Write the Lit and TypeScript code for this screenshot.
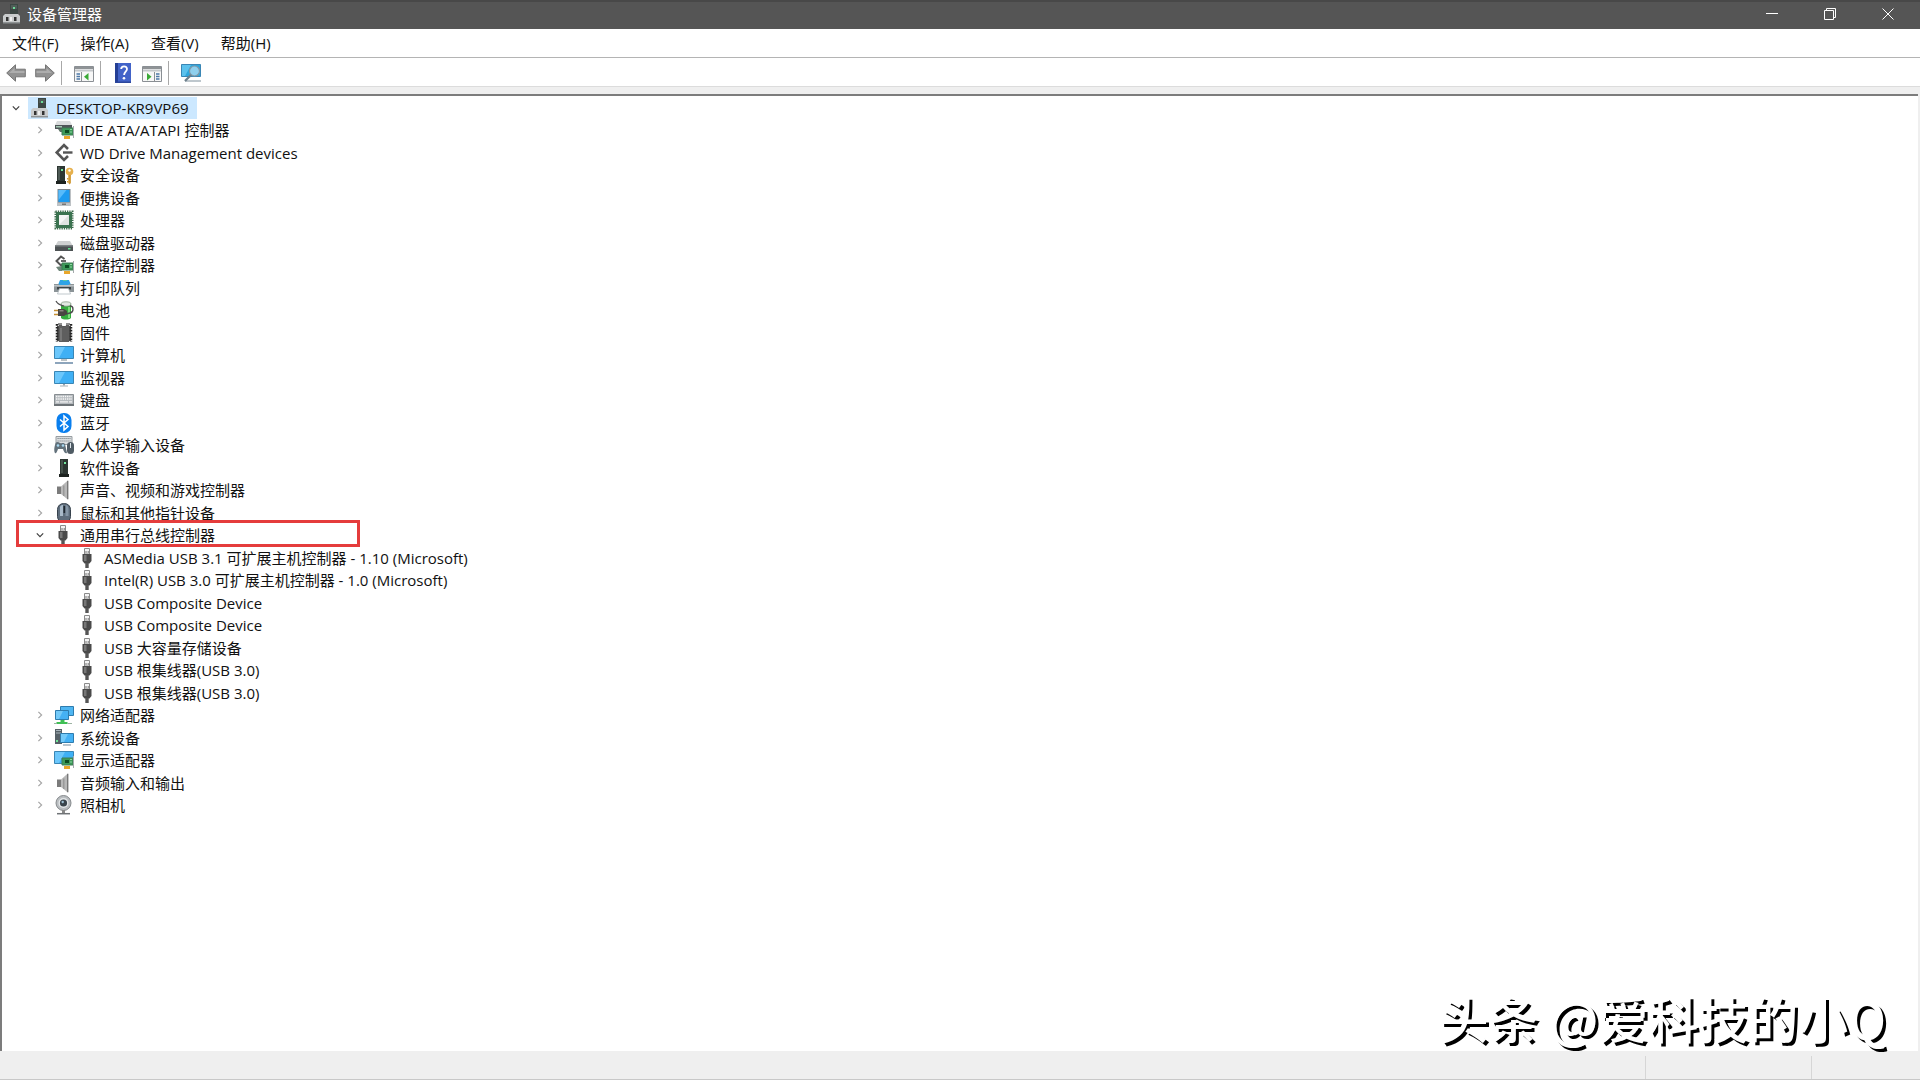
import { LitElement, html, svg, css, nothing } from "lit";
import { customElement, property, state } from "lit/decorators.js";

const board = svg`
  <path d="M8 8h11v7H8z" fill="#3c9a58"/>
  <path d="M8 8h11v7H8z" fill="none" stroke="#3f7d54"/>
  <path d="M11 10h4v3h-4z" fill="#0d4d22"/>
  <path d="M10 16h6v3h-6z" fill="#e8a72c"/>
  <path d="M16 9.500h2M16 12h2" stroke="#8fd6a2"/>
  <path d="M19.500 6v12" stroke="#a4aaad"/>`;

const usb = svg`
  <g transform="translate(-1 0)">
    <path d="M7.500 .5h5v5.500h-5z" fill="#f4f4f4" stroke="#8b8b8b"/>
    <path d="M8.500 3h1v2h-1zM10.700 3h1v2h-1z" fill="#777"/>
    <path d="M5.500 6h9v7l-2 2.500h-5l-2-2.500z" fill="#4a4a4a"/>
    <path d="M7 7h2.500v6H7z" fill="#777"/>
    <path d="M8.300 15h3.400v5H8.300z" fill="#555"/>
  </g>`;

const speaker = svg`
  <path d="M3 6.500h4v7.500H3z" fill="#7b7b7b"/>
  <path d="M7 6.500L13.500 .8v18.400L7 14z" fill="#b8b8b8"/>
  <path d="M9 5.500h1.500v10.500H9z" fill="#999"/>
  <path d="M13.700 .8v18.400" stroke="#777" stroke-width="1.400"/>`;

const pc = svg`
  <path d="M8 0h8v11H8z" fill="#3d4744"/>
  <path d="M9 1h6v4H9z" fill="#505d58"/>
  <path d="M11 3h2v2h-2z" fill="#6ddb99"/>
  <path d="M3 10h13l2 2v7H1v-7z" fill="#c9cbcc"/>
  <path d="M1 18h17v1.500H1z" fill="#8f9394"/>
  <path d="M4 13h2.500v4H4zM12 13h2.500v4H12z" fill="#333"/>
  <path d="M8 13h2v4H8z" fill="#eee"/>`;

const diamond = svg`
  <path d="M14 6L10 2 2.700 9.500 10 17l4-4" fill="none" stroke="#555" stroke-width="2.600"/>
  <path d="M9 9.500h9.500" stroke="#555" stroke-width="2.400"/>`;

const snapIn = svg`
  <path d="M.5 3.500h19v15H.5z" fill="#f7f7f7" stroke="#8a8f94"/>
  <path d="M1 4h18v2H1z" fill="#8f9396"/>
  <path d="M1 6.500h18v2H1z" fill="#c3c7ca"/>`;

const icons: Record<string, unknown> = {
  pc,
  usb,
  speaker,
  wd: diamond,
  ide: svg`
    <path d="M3 1h13l2 4H1z" fill="#d9dbdc"/><path d="M1 5h17v4H1z" fill="#4e5557"/>
    <path d="M4 9h5v3H6z" fill="#5f7468"/><path d="M2 6h6v1.500H2z" fill="#a3c7b2"/>${board}`,
  security: svg`
    <path d="M3 1h8v15H3z" fill="#2d3632"/><path d="M4 2h2v13H4z" fill="#4e5a55"/>
    <path d="M7 4h2v2H7z" fill="#74e79e"/><path d="M2 16h10v3H2z" fill="#1d2320"/>
    <circle cx="15.500" cy="6.500" r="3.800" fill="#e6b04d"/><circle cx="15.500" cy="5.500" r="1.200" fill="#fff"/>
    <path d="M14.300 10h2.600v8l-1.300 1.500-1.300-1.500z" fill="#d29a35"/>
    <path d="M13 13h1.500v1.500H13zM13 16h1.500v1.500H13z" fill="#d29a35"/>`,
  portable: svg`
    <path d="M3.500 1h13v17h-13z" fill="#7b8288"/><path d="M4.500 2h11v12h-11z" fill="#1e9bf0"/>
    <path d="M4.500 2h8l-8 10z" fill="#58bbfa"/><path d="M3.500 14.500h13V18h-13z" fill="#bcc2c6"/>
    <path d="M8 15.500h4v1.500H8z" fill="#777"/>`,
  cpu: svg`
    <rect x="1.500" y="1.500" width="17" height="17" fill="none" stroke="#3c6b4c" stroke-width="2" stroke-dasharray="1.300 1"/>
    <path d="M2 2h16v16H2z" fill="#3b7350"/><path d="M5 5h10v10H5z" fill="#dfe3e1"/>
    <path d="M5 5h10L5 15z" fill="#f5f6f6"/>`,
  disk: svg`
    <path d="M4 8h12l3 5H1z" fill="#cfd1d2"/><path d="M1 12h18v6H1z" fill="#4d5254"/>
    <path d="M1 12h18v1.500H1z" fill="#7c8284"/><path d="M14 15h2.500v1.500H14z" fill="#62df8e"/>`,
  storage: svg`
    <path d="M10.500 4L7 1.500 2.500 6 7 10.500l2-1.500" fill="none" stroke="#555" stroke-width="2"/>
    <path d="M7 6h5" stroke="#555" stroke-width="1.800"/>
    <path d="M2 12l6-1v5H5z" fill="#6e8578"/>${board}`,
  printer: svg`
    <path d="M6 2h9l2 5H4z" fill="#2ea3e6"/><path d="M9 2h4v4H9z" fill="#55c8a8"/>
    <path d="M0 6h20v8H0z" fill="#8c9498"/><path d="M6 3h8l1 4H5z" fill="#2ea3e6"/>
    <path d="M0 7h20v1.500H0z" fill="#bcc3c6"/><path d="M3 9h14v2.500H3z" fill="#3d4447"/>
    <path d="M5.500 10.500h9l2 5.500h-13z" fill="#fff" stroke="#a8b1b7" stroke-width=".7"/>`,
  battery: svg`
    <path d="M7 4h10v14c-2 2-8 2-10 0z" fill="#36ad3f"/>
    <ellipse cx="12" cy="4" rx="5" ry="2.200" fill="#e2e8e2" stroke="#789079" stroke-width=".7"/>
    <path d="M14 7h2v11h-2z" fill="#7bdc78"/>
    <path d="M2 1c2 4 5 4 8 5M16 6c4 0 4 6 0 7l-4 1" fill="none" stroke="#4d4d4d" stroke-width="1.300"/>
    <path d="M4 9h6l3 2v3l-3 2H4z" fill="#4a4642"/><path d="M5.500 10h4v1.500h-4z" fill="#8a8580"/>
    <path d="M0 10.500h4M0 14.500h4" stroke="#c59034" stroke-width="1.700"/>`,
  firmware: svg`
    <path d="M3 3h14v15H3z" fill="#4c4c4c"/>
    <path d="M3 1v18M17 1v18" stroke="#252525" stroke-width="2.500" stroke-dasharray="1.700 1.200"/>
    <path d="M5 2h3c0 2 4 2 4 0h3v17H5z" fill="#5e5e5e"/><path d="M6 5h2v13H6z" fill="#777"/>
    <path d="M4 1h4M12 1h4" stroke="#252525"/>`,
  computer: svg`
    <path d="M.5 1.500h19v12H.5z" fill="#3fb0f5" stroke="#3a86b5"/>
    <path d="M1 2h10L5 13H1z" fill="#6cc7fb"/><path d="M7 15h6" stroke="#8e9aa1" stroke-width="1.200"/>
    <path d="M1 18h18" stroke="#809bb5" stroke-width="1.800"/>`,
  monitor: svg`
    <path d="M.5 3.500h19v12H.5z" fill="#3fb0f5" stroke="#3a86b5"/>
    <path d="M1 4h10L5 15H1z" fill="#6cc7fb"/><path d="M9 16h2v1.500H9z" fill="#9aa4ab"/>
    <path d="M6 18h8" stroke="#a6afb5"/>`,
  keyboard: svg`
    <path d="M.5 4.500h19v11H.5z" fill="#b6bbbf" stroke="#888e92"/>
    <path d="M2 6.500h16M2 9h16" stroke="#f7f7f7" stroke-width="1.300" stroke-dasharray="1.400 .8"/>
    <path d="M2 11.800h3M6 11.800h8M15 11.800h3" stroke="#f2f2f2" stroke-width="1.300"/>
    <path d="M0 15h20" stroke="#6d7377" stroke-width="2"/>`,
  bluetooth: svg`
    <rect x="2.500" y="0" width="15" height="20" rx="7" fill="#0a7fee"/>
    <path d="M6 6.500l8 7-4 3.500V3l4 3.500-8 7" fill="none" stroke="#fff" stroke-width="1.500"/>`,
  hid: svg`
    <path d="M2 1.500h16v8H2z" fill="#dadddf" stroke="#979da1"/>
    <path d="M3.500 3.500h13M3.500 6h13" stroke="#7d8589" stroke-dasharray="1.200 .8"/>
    <path d="M1 10c1-4 3-3 5-2s3-1 5 1l2 9c-2 1-3-1-4-4H4c-1 3-2 5-3 4s-1-5 0-8z" fill="#62717b"/>
    <circle cx="4" cy="10.500" r="1.300" fill="#a8d7f0"/><circle cx="9" cy="10.500" r="1.300" fill="#a8d7f0"/>
    <rect x="13" y="7" width="7" height="12" rx="3.500" fill="#4f5b64"/><path d="M16.500 8v5" stroke="#dde6ec"/>`,
  software: svg`
    <path d="M6 1h8v15H6z" fill="#2d3632"/><path d="M7 2h2v13H7z" fill="#46524c"/>
    <path d="M10 4h2v2h-2z" fill="#74e79e"/><path d="M5 16h10v3H5z" fill="#1d2320"/>`,
  mouse: svg`
    <rect x="3.500" y=".5" width="13" height="19" rx="6" fill="#5e6d7c" stroke="#37424d"/>
    <path d="M6 3.500C7 2 8 2 9 2v11H6z" fill="#a9bac9"/><path d="M11.500 2c2 0 3 2 3 4v7h-3z" fill="#8495a5"/>
    <path d="M10.300 3v7" stroke="#1f2830" stroke-width="1.700"/>`,
  network: svg`
    <path d="M6.500 1.500h13v9h-13z" fill="#4fb6f2" stroke="#2e7cae"/>
    <path d="M1.500 5.500h13v9h-13z" fill="#45b1f4" stroke="#2e7cae"/><path d="M2 6h7l-4 8H2z" fill="#74caf9"/>
    <path d="M6.500 15h4v2h3v2h-11v-2h4z" fill="#3fbf55"/><path d="M0 18.500h3M13.500 18.500H18" stroke="#9db3a3"/>`,
  system: svg`
    <path d="M1 1h7v15H1z" fill="#566067"/><path d="M2 2.500h5M2 5h5" stroke="#a8b4bb"/><path d="M2 12h2v2H2z" fill="#6fe596"/>
    <path d="M6.500 5.500h13v9h-13z" fill="#45b1f4" stroke="#2e7cae"/><path d="M7 6h7l-4 8H7z" fill="#74caf9"/>
    <path d="M9 17h8" stroke="#93a6b3" stroke-width="1.300"/>`,
  display: svg`
    <path d="M.5 1.500h19v12H.5z" fill="#3fb0f5" stroke="#3a86b5"/><path d="M1 2h10L5 13H1z" fill="#6cc7fb"/>
    ${board}`,
  camera: svg`
    <circle cx="9.500" cy="8" r="7.500" fill="#b9bdc0" stroke="#85898c"/><circle cx="9.500" cy="8" r="5" fill="#e4e7e9"/>
    <circle cx="9.500" cy="8" r="3.600" fill="#39444c"/><circle cx="8.700" cy="7" r="1.200" fill="#9ec0d4"/>
    <path d="M8 15h3v3H8z" fill="#888"/><path d="M3 18.700h13" stroke="#6f7376" stroke-width="1.500"/>`,
  back: svg`<path d="M.7 10L9.500 1.800v4.400h9.800v7.600H9.500v4.400z" fill="#929292" stroke="#757575"/><path d="M3 10l5.500-5V8h10v2z" fill="#adadad"/>`,
  forward: svg`<path d="M19.300 10L10.500 1.800v4.400H.7v7.600h9.800v4.400z" fill="#929292" stroke="#757575"/><path d="M17 10l-5.500-5V8h-10v2z" fill="#adadad"/>`,
  tree: svg`${snapIn}
    <path d="M7.500 9v9.500" stroke="#8a8f94"/><path d="M2.500 11h3.500M2.500 13.500h3.500M2.500 16h3.500" stroke="#4c78a8" stroke-width="1.300"/>
    <path d="M14.500 10v7.500L10 13.800z" fill="#39a935"/>`,
  action: svg`${snapIn}
    <path d="M12.500 9v9.500" stroke="#8a8f94"/><path d="M14 11h3.500M14 13.500h3.500M14 16h3.500" stroke="#4c78a8" stroke-width="1.300"/>
    <path d="M5 10v7.500l4.500-3.700z" fill="#39a935"/>`,
  help: svg`
    <path d="M2 0h16v20H2z" fill="#4263c8"/><path d="M2 0h3v20H2z" fill="#243f95"/><path d="M2 18.500h16V20H2z" fill="#2c479c"/>
    <path d="M8.200 6c0-3.500 5.800-3.500 5.800 0 0 2.500-2.900 3-2.900 6" fill="none" stroke="#fff" stroke-width="1.800"/><circle cx="11" cy="15.300" r="1.300" fill="#fff"/>`,
  scan: svg`
    <path d="M.5 1.500h19v12H.5z" fill="#2ea6dc" stroke="#3a86b5"/><path d="M1 2h9L4 13H1z" fill="#5cc1ec"/>
    <path d="M4 18h16" stroke="#a9b5bd" stroke-width="1.500"/>
    <circle cx="13.500" cy="8" r="5" fill="#8fd0ee" stroke="#8298a6" stroke-width="1.200"/>
    <path d="M10 12L4 18" stroke="#6c7f8b" stroke-width="2.300"/>`,
};

interface Device {
  icon: string;
  name: string;
  level: number;
  open?: boolean;
  marked?: boolean;
}

const group = (icon: string, name: string): Device => ({ icon, name, level: 1 });
const port = (name: string): Device => ({ icon: "usb", name, level: 2 });

const devices: Device[] = [
  { icon: "pc", name: "DESKTOP-KR9VP69", level: 0, open: true },
  group("ide", "IDE ATA/ATAPI 控制器"),
  group("wd", "WD Drive Management devices"),
  group("security", "安全设备"),
  group("portable", "便携设备"),
  group("cpu", "处理器"),
  group("disk", "磁盘驱动器"),
  group("storage", "存储控制器"),
  group("printer", "打印队列"),
  group("battery", "电池"),
  group("firmware", "固件"),
  group("computer", "计算机"),
  group("monitor", "监视器"),
  group("keyboard", "键盘"),
  group("bluetooth", "蓝牙"),
  group("hid", "人体学输入设备"),
  group("software", "软件设备"),
  group("speaker", "声音、视频和游戏控制器"),
  group("mouse", "鼠标和其他指针设备"),
  { icon: "usb", name: "通用串行总线控制器", level: 1, open: true, marked: true },
  port("ASMedia USB 3.1 可扩展主机控制器 - 1.10 (Microsoft)"),
  port("Intel(R) USB 3.0 可扩展主机控制器 - 1.0 (Microsoft)"),
  port("USB Composite Device"),
  port("USB Composite Device"),
  port("USB 大容量存储设备"),
  port("USB 根集线器(USB 3.0)"),
  port("USB 根集线器(USB 3.0)"),
  group("network", "网络适配器"),
  group("system", "系统设备"),
  group("display", "显示适配器"),
  group("speaker", "音频输入和输出"),
  group("camera", "照相机"),
];

@customElement("dm-icon")
class DmIcon extends LitElement {
  @property() name = "";

  static styles = css`
    :host { display: block; flex: none; width: 20px; height: 20px; }
    .glyph { display: block; width: 100%; height: 100%; }
  `;

  render() {
    return html`<svg class="glyph" viewBox="0 0 20 20" aria-hidden="true">${icons[this.name]}</svg>`;
  }
}

@customElement("app-root")
class AppRoot extends LitElement {
  @state() private selected = 0;

  static styles = css`
    :host {
      display: flex;
      flex-direction: column;
      min-height: 100vh;
      box-sizing: border-box;
      background: #efefef;
      color: #111;
      font: 15px/22px "Open Sans", "Noto Sans CJK SC", sans-serif;
    }
    button { margin: 0; padding: 0; border: 0; background: none; color: inherit; font: inherit; }
    .titlebar {
      display: flex;
      align-items: center;
      height: 27px;
      padding: 0 3px 2px 2px;
      gap: 5px;
      box-shadow: inset 0 2px #484848;
      background: #555;
      color: #fff;
    }
    .title { flex: 1; margin: 0; font-size: 15px; font-weight: 400; }
    .controls { display: flex; }
    .control { display: grid; place-items: center; width: 58px; height: 27px; }
    .control-glyph { width: 12px; height: 12px; fill: none; stroke: #fff; }
    .menubar { display: flex; height: 28px; padding: 0 1px; background: #fff; border-bottom: 1px solid #b4b4b4; }
    .menu { padding: 0 11px; }
    .toolbar {
      display: flex;
      align-items: center;
      gap: 6px;
      height: 26px;
      padding: 2px 6px 0;
      background: #fff;
      border-bottom: 1px solid #dcdcdc;
    }
    .tools { display: flex; gap: 9px; }
    .tools + .tools { border-left: 1px solid #a8a8a8; padding: 2px 0 2px 12px; }
    .workspace {
      position: relative;
      flex: 1;
      margin: 7px 2px 0 0;
      border: solid #7c7c7c;
      border-width: 2px 0 0 2px;
      background: #fff;
    }
    .tree {
      display: grid;
      grid-auto-rows: 23px 22px;
      margin: 0;
      padding: 0 0 0 6px;
      list-style: none;
    }
    .row { display: flex; align-items: center; position: relative; }
    .level-1 { padding-left: 24px; }
    .level-2 { padding-left: 48px; }
    .toggle { display: grid; place-items: center; flex: none; width: 16px; height: 16px; margin-right: 4px; }
    .chevron { width: 8px; height: 8px; fill: none; stroke: #a6a6a6; stroke-width: 1.5; }
    .open { stroke: #404040; }
    .device { display: flex; align-items: center; gap: 6px; height: 22px; padding: 0 8px 0 2px; white-space: nowrap; }
    .selected { background: #cce8ff; }
    .mark {
      position: absolute;
      left: 8px;
      top: -4px;
      width: 338px;
      height: 21px;
      border: 3px solid #e53c3c;
      pointer-events: none;
      z-index: 1;
    }
    .watermark {
      position: absolute;
      right: 32px;
      bottom: -1px;
      margin: 0;
      color: #fff;
      font: 500 50px/70px "Noto Sans CJK SC", sans-serif;
      text-shadow: 3px 3px 0 #000;
      white-space: nowrap;
    }
    .statusbar { display: flex; justify-content: flex-end; height: 28px; border-bottom: 1px solid #c8c8c8; }
    .pane { width: 165px; margin-top: 5px; border-left: 1px solid #d6d6d6; }
    .pane-end { width: 108px; }
  `;

  private tool(icon: string, label: string) {
    return html`<button class="tool" aria-label=${label}><dm-icon name=${icon}></dm-icon></button>`;
  }

  private row(device: Device, index: number) {
    const { level, open, icon, name, marked } = device;
    return html`
      <li class="row level-${level}">
        ${level === 2
          ? html`<span class="toggle"></span>`
          : html`<button class="toggle" aria-label=${name} aria-expanded=${String(!!open)}>
              <svg class="chevron ${open ? "open" : ""}" viewBox="0 0 10 10" aria-hidden="true">
                <path d=${open ? "M1 3l4 4 4-4" : "M3 1l4 4-4 4"} />
              </svg>
            </button>`}
        <button class="device ${index === this.selected ? "selected" : ""}" @click=${() => (this.selected = index)}>
          <dm-icon name=${icon}></dm-icon><span>${name}</span>
        </button>
        ${marked ? html`<span class="mark"></span>` : nothing}
      </li>`;
  }

  render() {
    return html`
      <header class="titlebar">
        <dm-icon name="pc"></dm-icon>
        <h1 class="title">设备管理器</h1>
        <div class="controls">
          <button class="control" aria-label="最小化"><svg class="control-glyph" viewBox="0 0 12 12"><path d="M0 5.500h12" /></svg></button>
          <button class="control" aria-label="还原"><svg class="control-glyph" viewBox="0 0 12 12"><path d="M.5 2.500h9v9h-9zM2.500 2V.5h9v9H10" /></svg></button>
          <button class="control" aria-label="关闭"><svg class="control-glyph" viewBox="0 0 12 12"><path d="M.5.5l11 11M11.500.5l-11 11" /></svg></button>
        </div>
      </header>
      <nav class="menubar">
        ${["文件(F)", "操作(A)", "查看(V)", "帮助(H)"].map((label) => html`<button class="menu">${label}</button>`)}
      </nav>
      <div class="toolbar">
        <div class="tools">${this.tool("back", "后退")}${this.tool("forward", "前进")}</div>
        <div class="tools">${this.tool("tree", "显示/隐藏控制台树")}</div>
        <div class="tools">${this.tool("help", "帮助")}${this.tool("action", "显示/隐藏操作窗格")}</div>
        <div class="tools">${this.tool("scan", "扫描检测硬件改动")}</div>
      </div>
      <main class="workspace">
        <ul class="tree">${devices.map((device, index) => this.row(device, index))}</ul>
        <p class="watermark">头条 @爱科技的小Q</p>
      </main>
      <footer class="statusbar">
        <span class="pane"></span>
        <span class="pane pane-end"></span>
      </footer>
    `;
  }
}
